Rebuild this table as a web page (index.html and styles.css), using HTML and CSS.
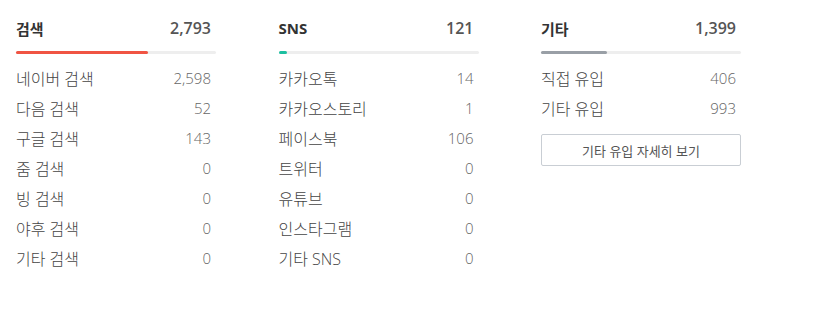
FILE: index.html
```html
<!DOCTYPE html>
<html lang="ko">
<head>
<meta charset="utf-8">
<link rel="stylesheet" href="styles.css">
</head>
<body>
<div class="wrap">
  <section class="col">
    <div class="head"><span class="title">검색</span><span class="total">2,793</span></div>
    <div class="bar"><div class="fill red" style="width:66%"></div></div>
    <ul class="list">
      <li><span class="label">네이버 검색</span><span class="num">2,598</span></li>
      <li><span class="label">다음 검색</span><span class="num">52</span></li>
      <li><span class="label">구글 검색</span><span class="num">143</span></li>
      <li><span class="label">줌 검색</span><span class="num">0</span></li>
      <li><span class="label">빙 검색</span><span class="num">0</span></li>
      <li><span class="label">야후 검색</span><span class="num">0</span></li>
      <li><span class="label">기타 검색</span><span class="num">0</span></li>
    </ul>
  </section>
  <section class="col">
    <div class="head"><span class="title">SNS</span><span class="total">121</span></div>
    <div class="bar"><div class="fill green" style="width:4%"></div></div>
    <ul class="list">
      <li><span class="label">카카오톡</span><span class="num">14</span></li>
      <li><span class="label">카카오스토리</span><span class="num">1</span></li>
      <li><span class="label">페이스북</span><span class="num">106</span></li>
      <li><span class="label">트위터</span><span class="num">0</span></li>
      <li><span class="label">유튜브</span><span class="num">0</span></li>
      <li><span class="label">인스타그램</span><span class="num">0</span></li>
      <li><span class="label">기타 SNS</span><span class="num">0</span></li>
    </ul>
  </section>
  <section class="col">
    <div class="head"><span class="title">기타</span><span class="total">1,399</span></div>
    <div class="bar"><div class="fill gray" style="width:33%"></div></div>
    <ul class="list">
      <li><span class="label">직접 유입</span><span class="num">406</span></li>
      <li><span class="label">기타 유입</span><span class="num">993</span></li>
    </ul>
    <button class="more">기타 유입 자세히 보기</button>
  </section>
</div>
</body>
</html>
```
FILE: styles.css
```css
* { box-sizing: border-box; }
body {
  margin: 0;
  background: #fff;
  font-family: "Open Sans", "Noto Sans CJK KR", sans-serif;
  color: #555;
}
.wrap {
  display: flex;
  gap: 62.5px;
  padding: 16px 0 0 16px;
}
.col {
  width: 200px;
}
.head {
  display: flex;
  justify-content: space-between;
  align-items: center;
  height: 24px;
  padding-right: 5px;
}
.title {
  font-size: 15px;
  font-weight: 700;
  color: #333;
}
.total {
  font-size: 16px;
  font-weight: 600;
  color: #555;
}
.bar {
  margin-top: 11px;
  height: 3px;
  background: #eeeeee;
  border-radius: 2px;
}
.fill {
  height: 100%;
  border-radius: 2px;
}
.red { background: #f05443; }
.green { background: #1cbfa0; }
.gray { background: #999fa6; }
.list {
  list-style: none;
  margin: 9px 0 0;
  padding: 0;
}
.list li {
  display: flex;
  justify-content: space-between;
  align-items: center;
  height: 30px;
  padding-right: 5px;
}
.label {
  font-size: 16px;
  font-weight: 300;
  color: #444;
}
.num {
  color: #666;
  font-size: 15px;
  font-weight: 300;
}
.more {
  display: block;
  width: 200px;
  height: 32px;
  margin-top: 11px;
  background: #fff;
  border: 1px solid #c9ced4;
  border-radius: 2px;
  font-family: "Open Sans", "Noto Sans CJK KR", sans-serif;
  font-size: 13px;
  color: #555;
}
```
